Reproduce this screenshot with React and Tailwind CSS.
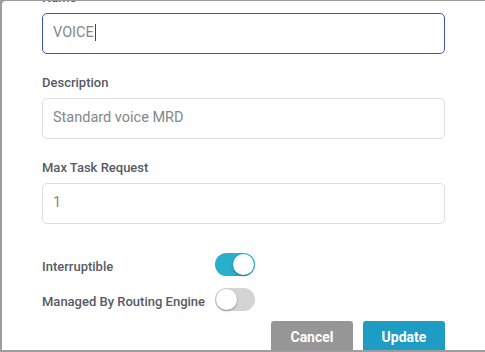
import React from 'react';

const Field = ({ label, value, focused, caret }) => (
  <div className="mb-[21px]">
    <div className="h-4 mb-[7px] text-[13px] leading-4 font-medium text-[#585a66]">{label}</div>
    <div
      className={
        'h-[41px] w-[403px] rounded-[5px] border bg-white flex items-center pl-[10px] text-[14.5px] text-[#868686] ' +
        (focused ? 'border-[#3f51b5]' : 'border-[#dedede]')
      }
    >
      <span className="-mt-[2px]">{value}</span>
      {caret && <span className="-mt-[2px] ml-px h-[17px] w-px bg-[#2a3fb0]" />}
    </div>
  </div>
);

const Toggle = ({ on }) => (
  <div
    className={
      'h-[23px] w-[40px] rounded-full flex items-center px-px ' +
      (on ? 'bg-[#27afcb] justify-end' : 'bg-[#d4d4d4] justify-start')
    }
  >
    <div className="h-[21px] w-[21px] rounded-full bg-white shadow-[0_1px_2px_rgba(0,0,0,0.35)]" />
  </div>
);

const App = () => {
  return (
    <div
      className="w-[485px] h-[352px] overflow-hidden bg-[#9d9d9d] pt-px pl-[2px] pb-[2px] flex"
      style={{ fontFamily: 'Roboto, "Liberation Sans", sans-serif' }}
    >
      <div className="flex-1 bg-white rounded-tl-[4px] overflow-hidden pl-[40px]">
        <div className="-mt-[11px] flex flex-col">
          <Field label="Name" value="VOICE" focused caret />
          <Field label="Description" value="Standard voice MRD" />
          <Field label="Max Task Request" value="1" />

          {/* switches */}
          <div className="mt-[8px] flex items-center h-[23px]">
            <div className="w-[173px] text-[13px] font-medium text-[#585a66] mt-[5px]">Interruptible</div>
            <Toggle on />
          </div>
          <div className="mt-[12px] flex items-center h-[23px] gap-[10px]">
            <div className="text-[13px] font-medium text-[#585a66] mt-[5px]">Managed By Routing Engine</div>
            <Toggle on={false} />
          </div>

          <div className="mt-[10px] w-[403px] flex justify-end gap-[10px]">
            <button className="h-8 w-[82px] rounded-[3px] bg-[#969696] text-white text-[14px] font-bold">
              Cancel
            </button>
            <button className="h-8 w-[82px] rounded-[3px] bg-[#1e9cc4] text-white text-[14px] font-bold">
              Update
            </button>
          </div>
        </div>
      </div>
    </div>
  );
};

export default App;
